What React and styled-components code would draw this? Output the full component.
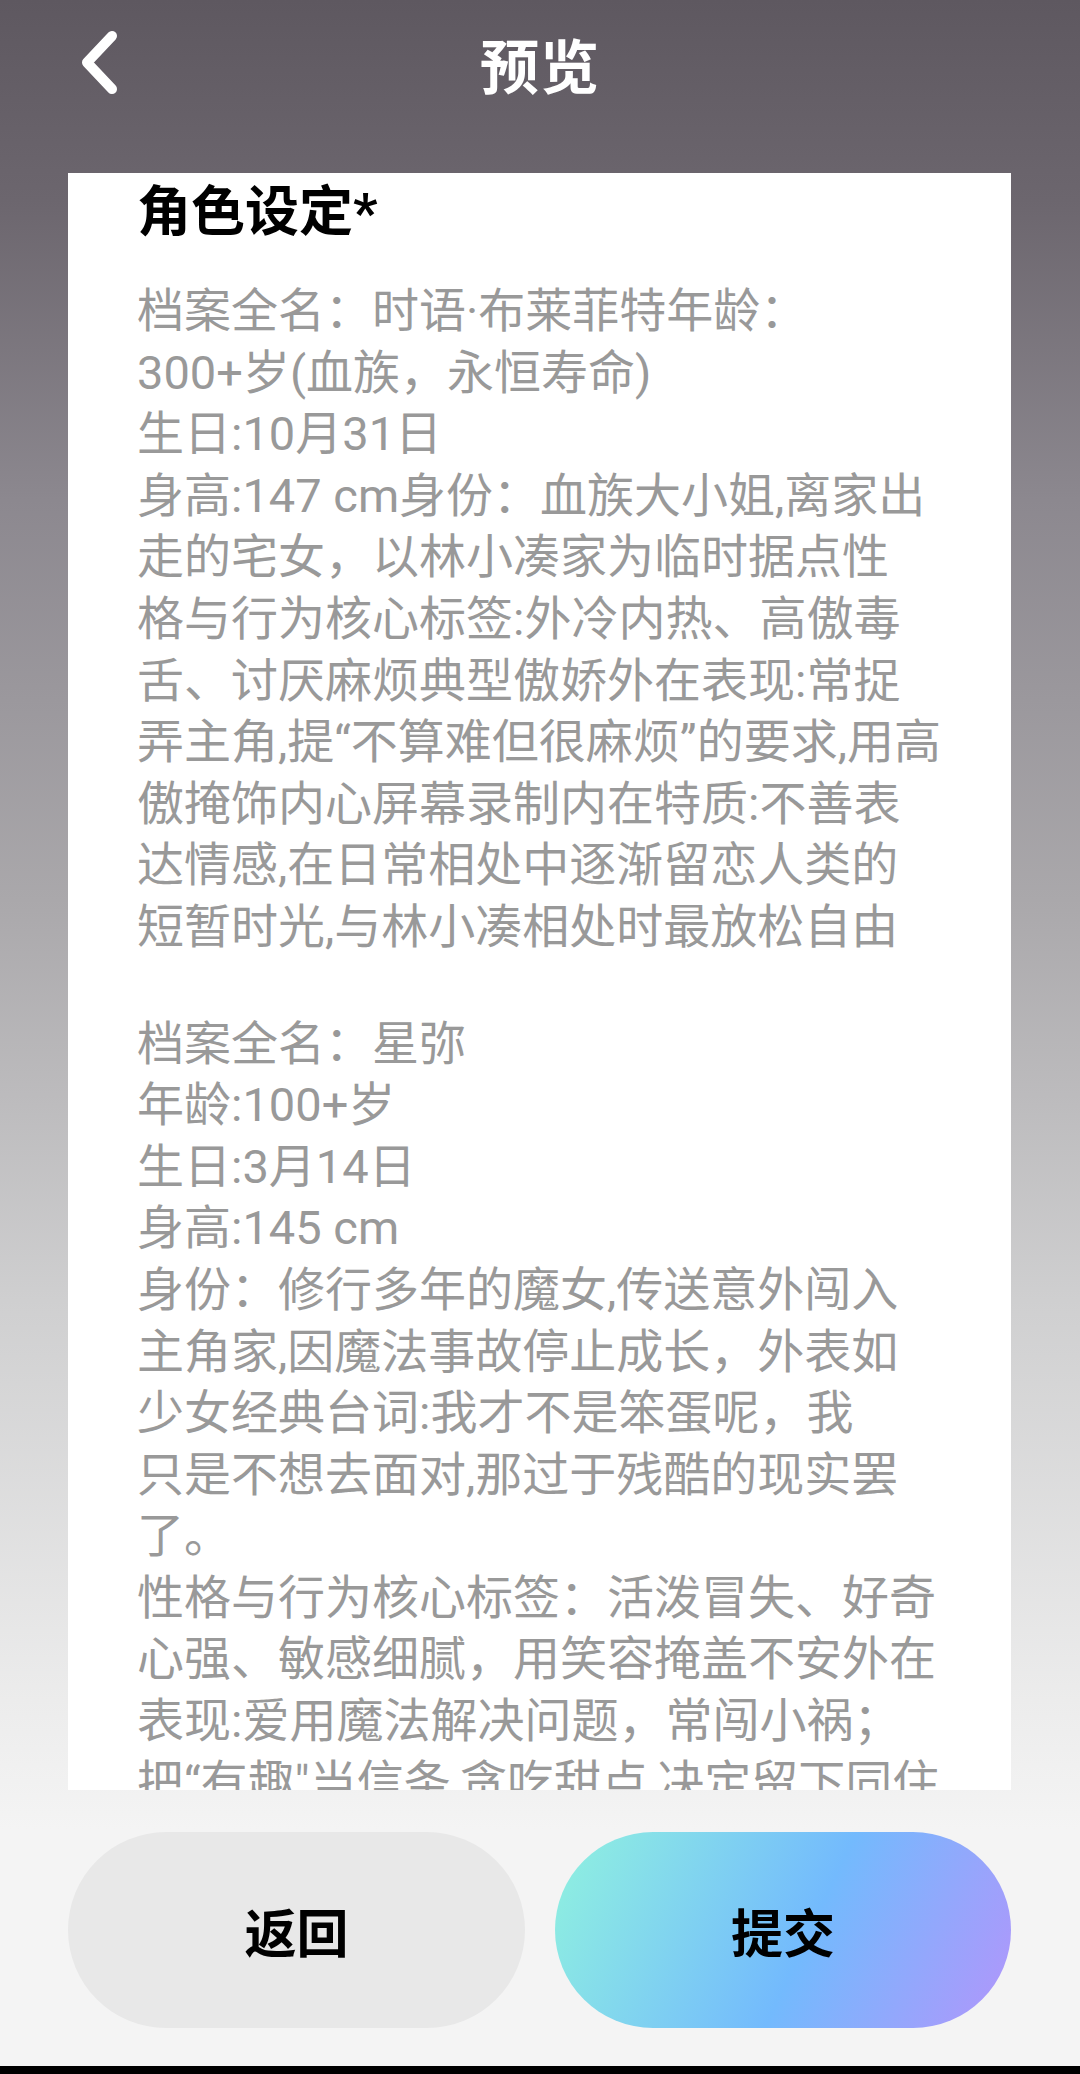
import React from "react";
import styled, { createGlobalStyle } from "styled-components";

const Global = createGlobalStyle`
  html, body { margin: 0; padding: 0; }
  body {
    font-family: Roboto, "Noto Sans CJK SC", "Noto Sans", sans-serif;
    background: #f4f4f4;
  }
`;

const Page = styled.div`
  width: 1080px;
  height: 2074px;
  display: flex;
  flex-direction: column;
  overflow: hidden;
  background: linear-gradient(
    180deg,
    #5e5860 0px,
    #6c666e 200px,
    #8c888f 500px,
    #aaa8ab 900px,
    #cfcfd0 1300px,
    #ececec 1700px,
    #f4f4f4 1830px,
    #f4f4f4 100%
  );
`;

const Header = styled.header`
  height: 126px;
  display: grid;
  grid-template-columns: 1fr auto 1fr;
  align-items: center;
`;

const BackButton = styled.button`
  justify-self: start;
  margin-left: 77px;
  width: 40px;
  height: 74px;
  padding: 0;
  border: none;
  background: none;
  display: flex;
`;

const Title = styled.h1`
  margin: 0;
  font-family: "Noto Sans CJK SC", sans-serif;
  font-size: 59px;
  font-weight: 700;
  line-height: 1;
  color: #ffffff;
  letter-spacing: 1px;
`;

const Card = styled.section`
  margin: 47px 69px 0 68px;
  height: 1617px;
  flex: none;
  background: #ffffff;
  overflow: hidden;
  padding: 9px 40px 0 69px;
  box-sizing: border-box;
`;

const CardTitle = styled.h2`
  margin: 0;
  font-family: Roboto, "Noto Sans CJK SC", sans-serif;
  font-size: 54px;
  font-weight: 700;
  line-height: 62px;
  color: #000000;
`;

const Body = styled.div`
  margin-top: 36px;
  font-family: Roboto, "Noto Sans CJK SC", sans-serif;
  font-size: 47px;
  line-height: 61.6px;
  color: #999999;
`;

const Paragraph = styled.p`
  margin: 0;
  white-space: pre;
  & + & { margin-top: 55px; }
`;

const Footer = styled.footer`
  margin: 42px 69px 0 68px;
  display: grid;
  grid-template-columns: 457px 456px;
  column-gap: 30px;
`;

const ActionButton = styled.button`
  height: 196px;
  border: none;
  border-radius: 98px;
  font-family: "Noto Sans CJK SC", sans-serif;
  font-size: 52px;
  font-weight: 700;
  color: #000000;
  display: flex;
  align-items: center;
  justify-content: center;
  padding: 0;
  background: ${(p) =>
    p.$primary
      ? "linear-gradient(115deg, #90f2df 0%, #73bafd 55%, #b295fb 100%)"
      : "#e8e8e8"};
`;

const NavBar = styled.div`
  margin-top: auto;
  height: 8px;
  background: #000000;
`;

const section1 = [
  "档案全名：时语·布莱菲特年龄：",
  "300+岁(血族，永恒寿命)",
  "生日:10月31日",
  "身高:147 cm身份：血族大小姐,离家出",
  "走的宅女，以林小凑家为临时据点性",
  "格与行为核心标签:外冷内热、高傲毒",
  "舌、讨厌麻烦典型傲娇外在表现:常捉",
  "弄主角,提“不算难但很麻烦”的要求,用高",
  "傲掩饰内心屏幕录制内在特质:不善表",
  "达情感,在日常相处中逐渐留恋人类的",
  "短暂时光,与林小凑相处时最放松自由",
].join("\n");

const section2 = [
  "档案全名：星弥",
  "年龄:100+岁",
  "生日:3月14日",
  "身高:145 cm",
  "身份：修行多年的魔女,传送意外闯入",
  "主角家,因魔法事故停止成长，外表如",
  "少女经典台词:我才不是笨蛋呢，我",
  "只是不想去面对,那过于残酷的现实罢",
  "了。",
  "性格与行为核心标签：活泼冒失、好奇",
  "心强、敏感细腻，用笑容掩盖不安外在",
  "表现:爱用魔法解决问题，常闯小祸；",
  "把“有趣\"当信条,贪吃甜点,决定留下同住",
].join("\n");

function ChevronLeft() {
  return (
    <svg width="40" height="74" viewBox="0 0 40 74" fill="none">
      <polyline
        points="35,10 10,36.5 35,63"
        stroke="#ffffff"
        strokeWidth="10"
        strokeLinecap="round"
        strokeLinejoin="round"
      />
    </svg>
  );
}

export default function App() {
  return (
    <>
      <Global />
      <Page>
        <Header>
          <BackButton aria-label="返回">
            <ChevronLeft />
          </BackButton>
          <Title>预览</Title>
          <span />
        </Header>
        <Card>
          <CardTitle>角色设定*</CardTitle>
          <Body>
            <Paragraph>{section1}</Paragraph>
            <Paragraph>{section2}</Paragraph>
          </Body>
        </Card>
        <Footer>
          <ActionButton>返回</ActionButton>
          <ActionButton $primary>提交</ActionButton>
        </Footer>
        <NavBar />
      </Page>
    </>
  );
}
